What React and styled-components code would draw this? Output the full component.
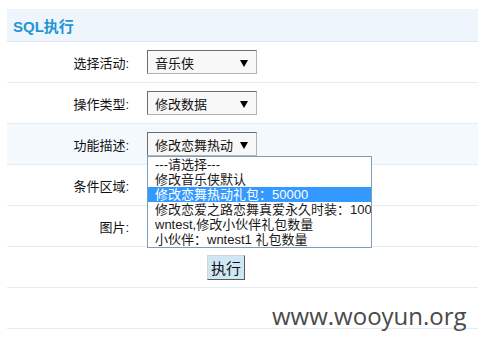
import React from 'react';
import styled, { createGlobalStyle } from 'styled-components';

const GlobalStyle = createGlobalStyle`
  html, body {
    margin: 0;
    padding: 0;
    background: #fff;
  }
  body {
    font-family: "Liberation Sans", "Noto Sans CJK SC", sans-serif;
    font-size: 13px;
    color: #111;
  }
`;

const Page = styled.div`
  position: relative;
  width: 478px;
  height: 347px;
  padding: 9px 0 0 7px;
  box-sizing: border-box;
  overflow: hidden;
`;

const Panel = styled.div`
  width: 471px;
`;

const Header = styled.div`
  height: 32px;
  display: flex;
  align-items: center;
  padding-left: 6px;
  background: #eef5fc;
  border-bottom: 1px solid #dce8f4;
  color: #2196d5;
  font-weight: bold;
  font-size: 15px;
`;

const Row = styled.div`
  position: relative;
  display: grid;
  grid-template-columns: 122px 1fr;
  column-gap: 18px;
  align-items: center;
  height: 40px;
  border-bottom: 1px solid #e1edf8;
  background: ${({ $tint }) => ($tint ? '#f4f9fe' : '#fff')};
`;

const Label = styled.div`
  text-align: right;
  font-size: 13px;
  color: #111;
`;

const Cell = styled.div`
  position: relative;
  display: flex;
  align-items: center;
  padding-left: ${({ $offset }) => $offset || 0}px;
`;

const Select = styled.div`
  position: relative;
  width: 110px;
  height: 24px;
  box-sizing: border-box;
  display: flex;
  align-items: center;
  padding-left: 7px;
  background: #f8f8f8;
  border: 1px solid #b4b4b4;
  border-top-color: #6e6e6e;
  border-left-color: #6e6e6e;
  font-size: 13px;
  color: #111;
`;

const Arrow = styled.svg`
  position: absolute;
  right: 8px;
  top: 9px;
`;

const List = styled.ul`
  position: absolute;
  top: 23px;
  left: -1px;
  z-index: 2;
  width: 225px;
  margin: 0;
  padding: 0;
  list-style: none;
  box-sizing: border-box;
  background: #fff;
  border: 1px solid #7f9db9;
`;

const Option = styled.li`
  height: 15px;
  line-height: 15px;
  padding-left: 7px;
  white-space: nowrap;
  overflow: hidden;
  font-size: 13px;
  background: ${({ $active }) => ($active ? '#3399ff' : 'transparent')};
  color: ${({ $active }) => ($active ? '#fff' : '#1a1a1a')};
`;

const Button = styled.button`
  width: 38px;
  height: 25px;
  padding: 0;
  background: #cfe7f4;
  border: 1px solid #5a5a5a;
  border-top-color: #d4d4d4;
  border-left-color: #d4d4d4;
  font-size: 15px;
  font-family: "Noto Sans CJK SC", sans-serif;
  color: #111;
`;

const Watermark = styled.div`
  position: absolute;
  left: 272px;
  top: 299px;
  font-family: "Open Sans", sans-serif;
  font-size: 24px;
  color: #4a4a4a;
`;

const DropArrow = () => (
  <Arrow width="8" height="7" viewBox="0 0 8 7">
    <path d="M0 0 H8 L4 7 Z" fill="#000" />
  </Arrow>
);

const options = [
  '---请选择---',
  '修改音乐侠默认',
  '修改恋舞热动礼包：50000',
  '修改恋爱之路恋舞真爱永久时装：100',
  'wntest,修改小伙伴礼包数量',
  '小伙伴：wntest1 礼包数量',
];

const App = () => (
  <Page>
    <GlobalStyle />
    <Panel>
      <Header>SQL执行</Header>
      <Row>
        <Label>选择活动:</Label>
        <Cell>
          <Select>音乐侠<DropArrow /></Select>
        </Cell>
      </Row>
      <Row>
        <Label>操作类型:</Label>
        <Cell>
          <Select>修改数据<DropArrow /></Select>
        </Cell>
      </Row>
      <Row $tint>
        <Label>功能描述:</Label>
        <Cell>
          <Select>
            修改恋舞热动<DropArrow />
            <List>
              {options.map((o, i) => (
                <Option key={i} $active={i === 2}>{o}</Option>
              ))}
            </List>
          </Select>
        </Cell>
      </Row>
      <Row>
        <Label>条件区域:</Label>
        <Cell />
      </Row>
      <Row>
        <Label>图片:</Label>
        <Cell />
      </Row>
      <Row>
        <div />
        <Cell $offset={60}>
          <Button>执行</Button>
        </Cell>
      </Row>
      <Row>
        <div />
        <Cell />
      </Row>
    </Panel>
    <Watermark>www.wooyun.org</Watermark>
  </Page>
);

export default App;
